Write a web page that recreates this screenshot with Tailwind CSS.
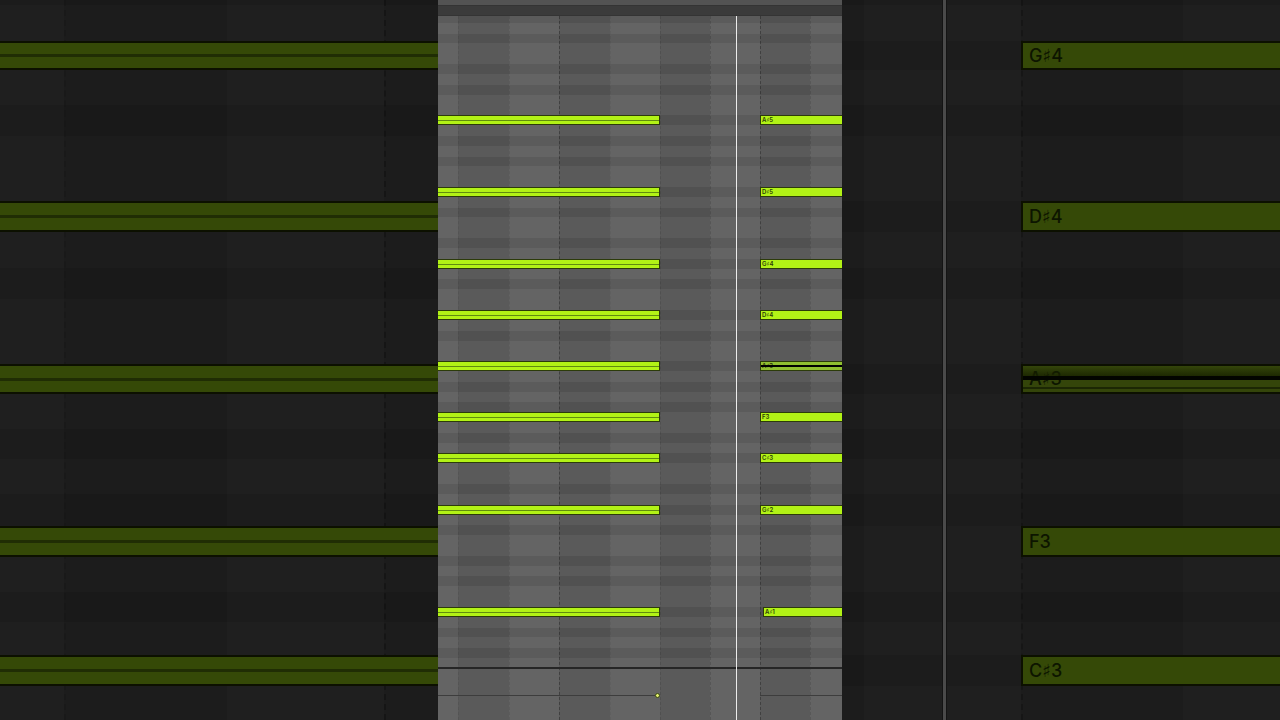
<!DOCTYPE html>
<html lang="en">
<head>
  <meta charset="UTF-8" />
  <meta name="viewport" content="width=device-width, initial-scale=1.0" />
  <title>Piano Roll</title>
  <script src="https://cdn.jsdelivr.net/npm/@tailwindcss/browser@4"></script>
</head>
<body class="bg-[#1e1e1e] font-['Inter','DejaVu_Sans',sans-serif]">
  <main class="flex min-h-screen overflow-hidden">

    <!-- enlarged roll, left -->
    <section class="relative flex-1 flex flex-col overflow-hidden">
      <div class="absolute inset-0 flex">
        <div class="w-16 bg-[#1f1f1f]"></div>
        <div class="w-[163px] bg-[#1c1c1c] border-l-2 border-dashed border-[#191919]"></div>
        <div class="w-[157px] bg-[#1f1f1f]"></div>
        <div class="flex-1 bg-[#1c1c1c] border-l-2 border-dashed border-[#151515]"></div>
      </div>
      <div id="rollLeft" class="relative flex-1 flex flex-col"></div>
    </section>

    <!-- piano roll -->
    <section class="relative w-[404px] flex flex-col bg-[#646464]">
      <div class="h-[5px] bg-[#535353]"></div>
      <div class="h-[11px] bg-[#3b3b3b] border-y border-[#343434]"></div>
      <div class="relative flex-1 flex flex-col">
        <div class="absolute inset-0 flex">
          <div class="w-5"></div>
          <div class="w-[51px] bg-[#5a5a5a] border-l border-dashed border-[#545454]"></div>
          <div class="w-[50px] border-l border-dashed border-[#5c5c5c]"></div>
          <div class="w-[51px] bg-[#5a5a5a] border-l border-dashed border-[#404040]"></div>
          <div class="w-[50px] border-l border-dashed border-[#5f5f5f]"></div>
          <div class="w-[50px] bg-[#5a5a5a] border-l border-dashed border-[#505050]"></div>
          <div class="w-[50px] border-l border-dashed border-[#565656]"></div>
          <div class="w-[50px] bg-[#5a5a5a] border-l border-dashed border-[#404040]"></div>
          <div class="flex-1 border-l border-dashed border-[#585858]"></div>
        </div>
        <div id="roll" class="relative"></div>
        <div class="relative h-[2px] bg-[#262626]"></div>
        <!-- velocity lane -->
        <div class="relative flex-1 flex items-start pt-6">
          <div class="w-[217px] mt-[2px] h-px bg-[#3d3d3d]"></div>
          <div class="size-[5px] rounded-full bg-[#e2f070] border border-[#3c4a10]"></div>
          <div class="ml-[100px] mt-[2px] flex-1 h-px bg-[#3d3d3d]"></div>
        </div>
        <div class="absolute inset-y-0 left-[298px] w-px bg-[#ececec]"></div>
      </div>
    </section>

    <!-- enlarged roll, right -->
    <section class="relative flex-1 flex flex-col overflow-hidden">
      <div class="absolute inset-0 flex">
        <div class="w-[22px] bg-[#1c1c1c]"></div>
        <div class="w-[157px] bg-[#1f1f1f]"></div>
        <div class="w-[162px] bg-[#1c1c1c] border-l-2 border-dashed border-[#161616]"></div>
        <div class="flex-1 bg-[#1f1f1f]"></div>
      </div>
      <div id="rollRight" class="relative flex-1 flex flex-col"></div>
      <div class="absolute inset-y-0 left-[100px] w-[5px] bg-[#4a4a4a] border-x border-[#141414]"></div>
    </section>
  </main>

  <script>
    // [height, key colour (b = black key, w = white key), note]
    const lanes = [
      [7, 'b'], [11, 'w'], [9, 'b'], [21, 'w'], [10, 'b'], [11, 'w'], [10, 'b'], [20, 'w'],
      [10, 'b', 'A♯5'], [11, 'w'], [10, 'b'], [11, 'w'], [9, 'b'], [21, 'w'],
      [10, 'b', 'D♯5'], [11, 'w'], [9, 'b'], [21, 'w'], [10, 'b'], [11, 'w'],
      [10, 'b', 'G♯4'], [10, 'w'], [10, 'b'], [21, 'w'],
      [10, 'b', 'D♯4'], [11, 'w'], [10, 'b'], [20, 'w'],
      [10, 'b', 'A♯3'], [11, 'w'], [10, 'b'], [10, 'w'], [10, 'b'],
      [10, 'w', 'F3'], [11, 'w'], [10, 'b'], [10, 'w'],
      [10, 'b', 'C♯3'], [21, 'w'], [10, 'b'], [11, 'w'],
      [10, 'b', 'G♯2'], [10, 'w'], [10, 'b'], [21, 'w'], [10, 'b'], [10, 'w'], [10, 'b'], [21, 'w'],
      [10, 'b', 'A♯1'], [11, 'w'], [9, 'b'], [11, 'w'], [10, 'b'], [9, 'w']
    ];

    const bigLanes = [
      [5, 'b'], [36, 'w'], [29, 'b', 'G♯4'], [35, 'w'], [31, 'b'], [65, 'w'],
      [31, 'b', 'D♯4'], [36, 'w'], [31, 'b'], [65, 'w'],
      [30, 'b', 'A♯3'], [35, 'w'], [30, 'b'], [35, 'w'], [32, 'b'],
      [31, 'w', 'F3'], [35, 'w'], [30, 'b'], [33, 'w'],
      [31, 'b', 'C♯3'], [34, 'w']
    ];

    function lane(height, key, dark, content) {
      return `<div class="flex ${key === 'b' ? dark : ''}" style="height:${height}px">${content}</div>`;
    }

    function label(name) {
      return name.replace('♯', `<span class="font-['DejaVu_Sans'] font-bold">♯</span>`);
    }

    function notes(name) {
      if (!name) return '';
      const gap = name === 'A♯1' ? 'ml-[103px]' : 'ml-[100px]';
      const struck = name === 'A♯3';
      return `
        <div class="w-[222px] flex flex-col justify-center bg-[#b2f216] border border-l-0 border-[#2c3b0a]">
          <div class="h-px bg-[#618c10]"></div>
        </div>
        <div class="${gap} relative flex-1 flex items-center pl-px border border-r-0 border-[#2c3b0a] ${struck ? 'bg-[#8fbe30]' : 'bg-[#b2f216]'}">
          <span class="text-[6px] leading-none font-semibold text-[#2c3b0a]">${label(name)}</span>
          ${struck ? '<div class="absolute inset-x-0 top-[3px] h-[2px] bg-black"></div>' : ''}
        </div>`;
    }

    function bigHeld(name) {
      if (!name) return '';
      return `
        <div class="flex-1 flex flex-col justify-center bg-[#354907] border-y-2 border-[#0c1000]">
          <div class="h-[3px] bg-[#202d04]"></div>
        </div>`;
    }

    function bigNote(name) {
      if (!name) return '';
      const struck = name === 'A♯3';
      return `
        <div class="ml-[179px] relative flex-1 flex items-center pl-[6px] border-2 border-r-0 border-[#0c1000] ${struck ? 'bg-[#34450a]' : 'bg-[#354907]'}">
          <span class="text-lg leading-none font-medium text-[#0d1500]">${label(name)}</span>
          ${struck ? `
            <div class="absolute inset-x-0 top-0 h-[10px] bg-linear-to-b from-transparent to-[#182200]/80"></div>
            <div class="absolute inset-x-0 top-[10px] h-[4px] bg-[#030500]"></div>
            <div class="absolute inset-x-0 top-[21px] h-[2px] bg-[#1c2704]"></div>` : ''}
        </div>`;
    }

    document.getElementById('roll').innerHTML =
      lanes.map(([h, key, name]) => lane(h, key, 'bg-black/9', notes(name))).join('');
    document.getElementById('rollLeft').innerHTML =
      bigLanes.map(([h, key, name]) => lane(h, key, 'bg-black/8', bigHeld(name))).join('');
    document.getElementById('rollRight').innerHTML =
      bigLanes.map(([h, key, name]) => lane(h, key, 'bg-black/8', bigNote(name))).join('');
  </script>
</body>
</html>
